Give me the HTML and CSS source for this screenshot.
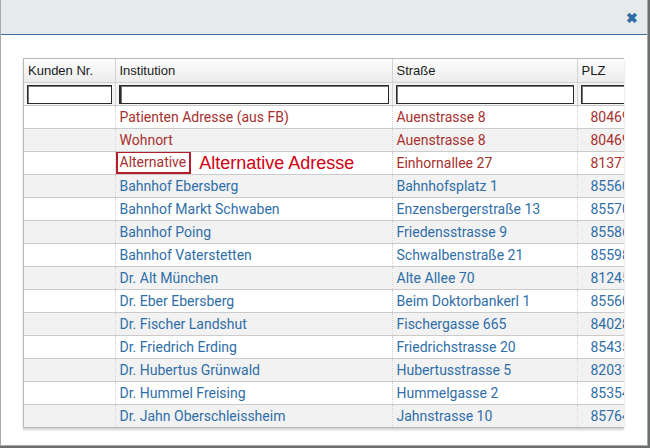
FILE: index.html
```html
<!DOCTYPE html>
<html lang="en">
<head>
    <meta charset="UTF-8">
    <title>Adresse wählen</title>
    <link rel="stylesheet" href="styles.css">
</head>
<body>
    <div class="dialog">
        <div class="dialog-head">
            <span class="close">&#x2716;</span>
        </div>
        <div class="dialog-body">
            <div class="grid">
                <table>
                    <colgroup>
                        <col class="c-nr">
                        <col class="c-inst">
                        <col class="c-str">
                        <col class="c-plz">
                    </colgroup>
                    <thead>
                        <tr class="titles">
                            <th>Kunden Nr.</th>
                            <th>Institution</th>
                            <th>Straße</th>
                            <th>PLZ</th>
                        </tr>
                        <tr class="filters">
                            <th><input type="text"></th>
                            <th><input type="text" class="focus"></th>
                            <th><input type="text"></th>
                            <th><input type="text"></th>
                        </tr>
                    </thead>
                    <tbody>
                        <tr class="red"><td></td><td>Patienten Adresse (aus FB)</td><td>Auenstrasse 8</td><td class="plz">80469</td></tr>
                        <tr class="red"><td></td><td>Wohnort</td><td>Auenstrasse 8</td><td class="plz">80469</td></tr>
                        <tr class="red"><td></td><td class="alt"><span class="mark">Alternative</span><span class="note">Alternative Adresse</span></td><td>Einhornallee 27</td><td class="plz">81377</td></tr>
                        <tr><td></td><td>Bahnhof Ebersberg</td><td>Bahnhofsplatz 1</td><td class="plz">85560</td></tr>
                        <tr><td></td><td>Bahnhof Markt Schwaben</td><td>Enzensbergerstraße 13</td><td class="plz">85570</td></tr>
                        <tr><td></td><td>Bahnhof Poing</td><td>Friedensstrasse 9</td><td class="plz">85586</td></tr>
                        <tr><td></td><td>Bahnhof Vaterstetten</td><td>Schwalbenstraße 21</td><td class="plz">85598</td></tr>
                        <tr><td></td><td>Dr. Alt München</td><td>Alte Allee 70</td><td class="plz">81245</td></tr>
                        <tr><td></td><td>Dr. Eber Ebersberg</td><td>Beim Doktorbankerl 1</td><td class="plz">85560</td></tr>
                        <tr><td></td><td>Dr. Fischer Landshut</td><td>Fischergasse 665</td><td class="plz">84028</td></tr>
                        <tr><td></td><td>Dr. Friedrich Erding</td><td>Friedrichstrasse 20</td><td class="plz">85435</td></tr>
                        <tr><td></td><td>Dr. Hubertus Grünwald</td><td>Hubertusstrasse 5</td><td class="plz">82031</td></tr>
                        <tr><td></td><td>Dr. Hummel Freising</td><td>Hummelgasse 2</td><td class="plz">85354</td></tr>
                        <tr><td></td><td>Dr. Jahn Oberschleissheim</td><td>Jahnstrasse 10</td><td class="plz">85764</td></tr>
                    </tbody>
                </table>
            </div>
        </div>
    </div>
</body>
</html>
```

FILE: styles.css
```css
body { margin: 0; background: #6d6f6e; font-family: "Liberation Sans", Arial, sans-serif; }
.dialog { width: 646px; height: 445px; background: #fff; border: 1px solid #a9a9a9; border-top: none; }
.dialog-head { height: 34px; background: #e7eaeb; border-bottom: 1px solid #3a71a3; display: flex; justify-content: flex-end; align-items: center; padding-right: 9px; }
.close { color: #2f6ca8; font-size: 14px; font-weight: bold; margin-top: 1px; }
.dialog-body { padding: 23px 0 0 22px; }
.grid { width: 600px; height: 368px; overflow: hidden; border: 1px solid #b9b9b9; border-right: none; box-shadow: 0 2px 2px rgba(0,0,0,0.18); }
table { border-collapse: collapse; table-layout: fixed; width: 660px; }
.c-nr { width: 91px; }
.c-inst { width: 277px; }
.c-str { width: 185px; }
.c-plz { width: 107px; }
th { text-align: left; font-weight: normal; padding: 0 4px; border-left: 1px solid #d3d3d3; }
th:first-child, td:first-child { border-left: none; }
.titles th { height: 23px; font-size: 13px; color: #1a1a1a; background: linear-gradient(#fdfdfd, #ececec); border-bottom: 1px solid #d0d0d0; }
.filters th { height: 22px; padding: 0 3px; background: #f4f4f4; border-bottom: 1px solid #c6c6c6; }
input { display: block; box-sizing: border-box; width: 100%; height: 19px; margin: 0; border: 1px solid #2a2a2a; box-shadow: inset 1px 1px 0 #777; background: #fff; padding: 0 2px; }
input.focus { border-left-width: 2px; }
td { height: 22px; padding: 0 4px; font-family: Roboto, "Liberation Sans", sans-serif; font-size: 14px; color: #2f6ea8; border-left: 1px dotted #cfcfcf; border-bottom: 1px solid #cbcbcb; white-space: nowrap; overflow: hidden; }
tbody tr:nth-child(even) td { background: #f2f2f2; }
tr.red td { color: #a8302e; }
td.plz { padding-left: 13px; }
td.alt { padding-left: 0; }
.mark { display: inline-block; box-sizing: border-box; height: 23px; line-height: 19px; padding: 0 3px 0 2px; border: 2px solid #b71c2a; vertical-align: middle; margin-top: -1px; }
.note { font-family: "Liberation Sans", Arial, sans-serif; font-size: 18px; color: #d0000f; margin-left: 8px; vertical-align: middle; }
```
